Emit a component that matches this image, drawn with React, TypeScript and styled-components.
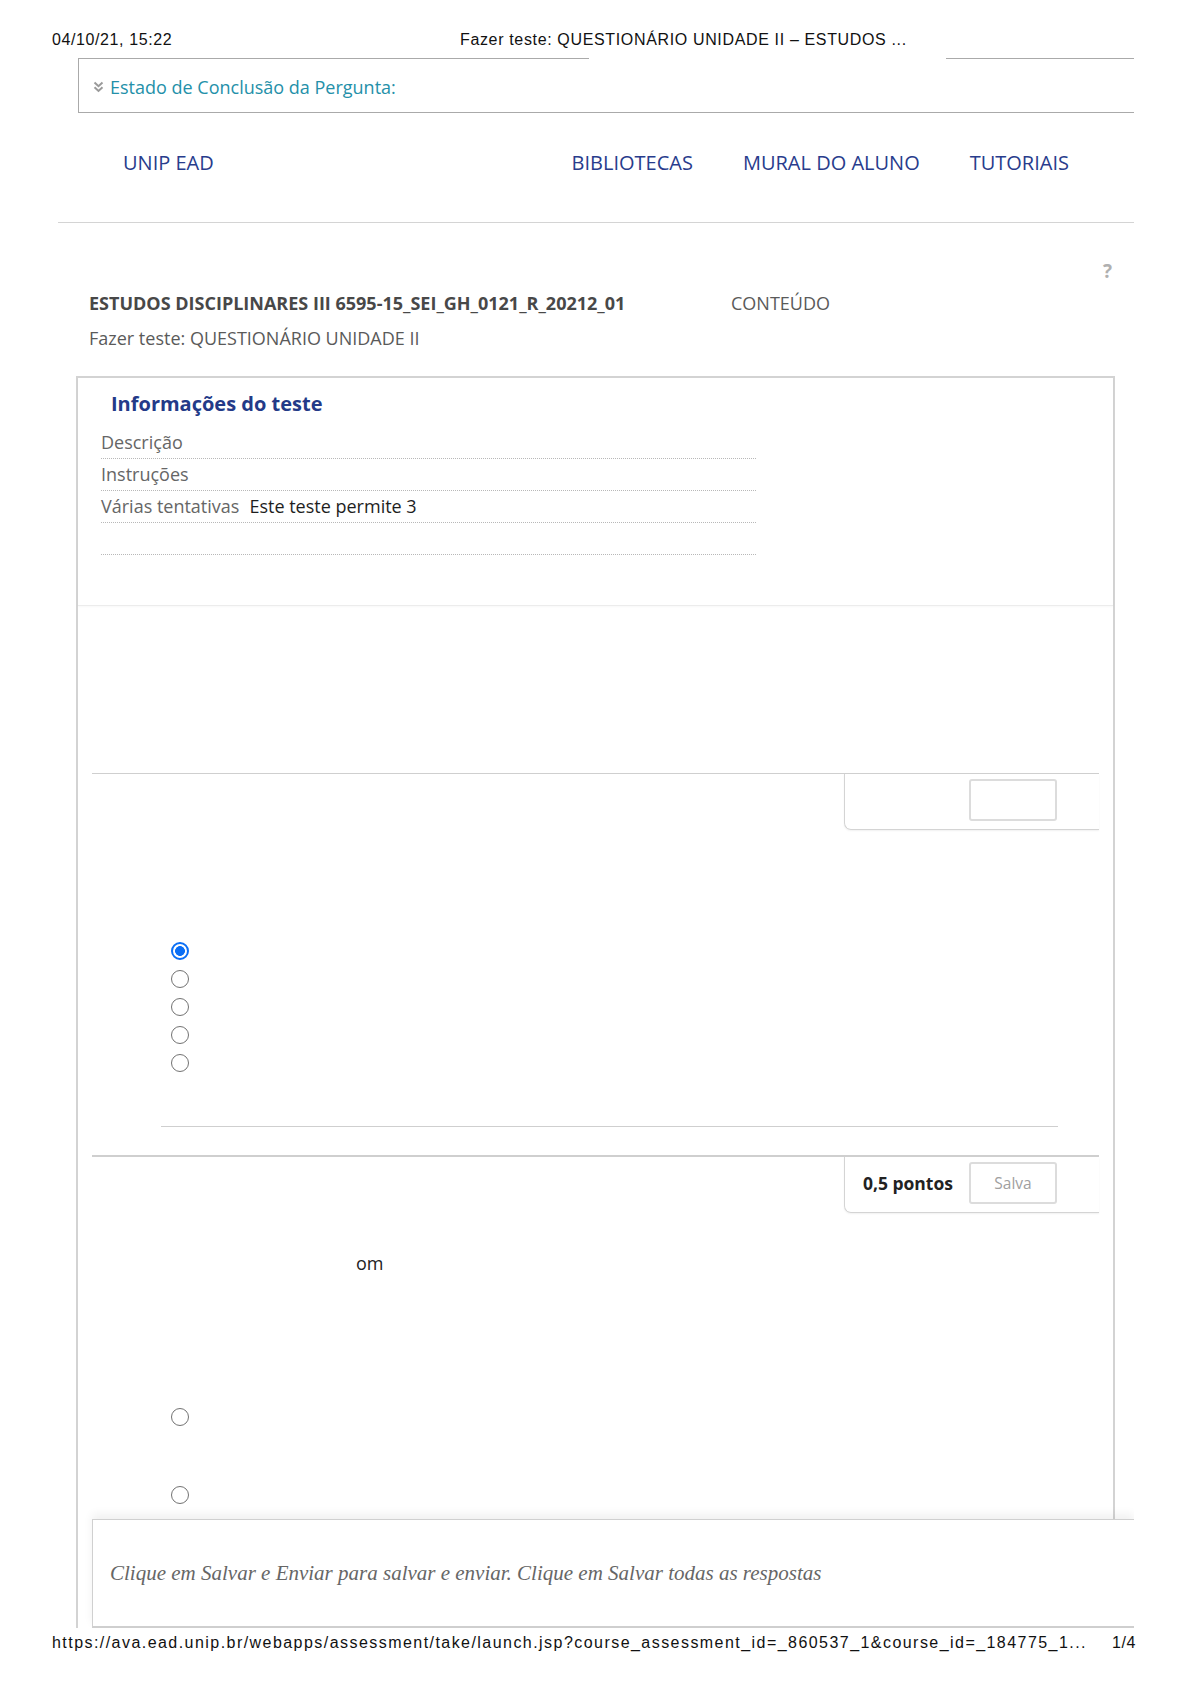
import React from "react"
import styled, { createGlobalStyle } from "styled-components"

const GlobalStyle = createGlobalStyle`
  html, body {
    margin: 0;
    padding: 0;
    background: #fff;
  }
  body {
    font-family: "Open Sans", "Liberation Sans", sans-serif;
    color: #333;
  }
`

const Sheet = styled.div`
  width: 1190px;
  height: 1684px;
  overflow: hidden;
  background: #fff;
`
const PrintHeader = styled.div`
  display: grid;
  grid-template-columns: 408px auto;
  height: 58px;
  box-sizing: border-box;
  padding: 30px 0 0 52px;
  font-family: "Liberation Sans", Arial, sans-serif;
  font-size: 16px;
  line-height: 20px;
  color: #111;
`
const PrintText = styled.span<{ $spacing: number }>`
  letter-spacing: ${(p) => p.$spacing}px;
`
const PrintFooter = styled.div`
  display: flex;
  justify-content: space-between;
  margin-top: 5px;
  padding: 0 54px 0 52px;
  font-family: "Liberation Sans", Arial, sans-serif;
  font-size: 16px;
  line-height: 20px;
  color: #111;
`
const Clip = styled.div`
  height: 1570px;
  overflow: hidden;
  margin-left: 58px;
  width: 1076px;
`
const StatusBox = styled.div`
  margin-left: 20px;
  height: 55px;
  box-sizing: border-box;
  padding: 3px 0 0 14px;
  display: flex;
  align-items: center;
  gap: 6px;
  border-left: 1px solid #aaa;
  border-bottom: 1px solid #aaa;
  background: linear-gradient(
      to right,
      #aaa 0,
      #aaa 510px,
      transparent 510px,
      transparent 867px,
      #aaa 867px
    )
    top left / 100% 1px no-repeat;
`
const StatusLink = styled.span`
  color: #2490a9;
  font-size: 18px;
`
const NavBar = styled.nav`
  height: 109px;
  box-sizing: border-box;
  padding: 0 65px 10px 65px;
  display: flex;
  align-items: center;
  justify-content: space-between;
`
const NavGroup = styled.div`
  display: flex;
  gap: 50px;
`
const NavLink = styled.a`
  color: #283c8c;
  font-size: 20px;
  text-decoration: none;
`
const Divider = styled.div`
  height: 1px;
  background: #d4d4d4;
`
const HelpRow = styled.div`
  margin-top: 37px;
  padding-right: 22px;
  text-align: right;
  font-size: 19px;
  font-weight: 700;
  line-height: 22px;
  color: #b0b0b0;
`
const CourseRow = styled.div`
  display: grid;
  grid-template-columns: 642px auto;
  margin-top: 9px;
  padding-left: 31px;
  line-height: 24px;
  font-size: 18px;
`
const CourseTitle = styled.span`
  font-weight: 700;
  color: #484848;
`
const CourseTab = styled.span`
  color: #5a5a5a;
`
const Breadcrumb = styled.div`
  margin-top: 11px;
  padding-left: 31px;
  line-height: 24px;
  font-size: 18px;
  color: #5a5a5a;
`
const OuterBox = styled.div`
  margin: 26px 0 0 18px;
  width: 1039px;
  box-sizing: border-box;
  border: 2px solid #d3d3d3;
  border-bottom: none;
  height: 1400px;
`
const InfoPanel = styled.section`
  padding: 12px 0 50px 0;
  border-bottom: 1px solid #ececec;
  box-shadow: 0 1px 2px rgba(0, 0, 0, 0.03);
`
const InfoTitle = styled.h3`
  margin: 0 0 9px 33px;
  font-size: 20px;
  line-height: 28px;
  font-weight: 700;
  color: #233a88;
`
const InfoList = styled.div`
  margin-left: 23px;
  width: 655px;
`
const InfoRow = styled.div`
  display: flex;
  gap: 10px;
  height: 32px;
  box-sizing: border-box;
  border-bottom: 1px dotted #b8b8b8;
  font-size: 18px;
  line-height: 31px;
`
const InfoLabel = styled.span`
  color: #666;
`
const InfoValue = styled.span`
  color: #1e1e1e;
`
const Question = styled.div<{ $first?: boolean; $gap: number }>`
  margin: ${(p) => p.$gap}px 14px 0 14px;
  border-top: ${(p) => (p.$first ? 1 : 2)}px solid #cfcfcf;
`
const QuestionHead = styled.div`
  display: flex;
  justify-content: flex-end;
`
const PointsBox = styled.div`
  width: 255px;
  height: 56px;
  box-sizing: border-box;
  padding: 5px 42px 0 0;
  display: flex;
  align-items: flex-start;
  justify-content: flex-end;
  gap: 16px;
  border-left: 1px solid #d4d4d4;
  border-bottom: 1px solid #d4d4d4;
  border-bottom-left-radius: 7px;
  box-shadow: 0 1px 2px rgba(0, 0, 0, 0.06);
`
const Points = styled.span`
  font-size: 17.5px;
  font-weight: 700;
  line-height: 42px;
  color: #222;
`
const SaveButton = styled.button`
  width: 88px;
  height: 42px;
  box-sizing: border-box;
  border: 2px solid #dcdcdc;
  border-radius: 3px;
  background: #fff;
  font-family: "Open Sans", sans-serif;
  font-size: 15.5px;
  color: #a0a0a0;
  padding: 0;
`
const Choices = styled.div<{ $top: number; $gap: number }>`
  margin-top: ${(p) => p.$top}px;
  padding-left: 79px;
  display: flex;
  flex-direction: column;
  gap: ${(p) => p.$gap}px;
`
const ChoiceRow = styled.div`
  height: 28px;
  display: flex;
  align-items: center;
`
const Radio = styled.span<{ $checked?: boolean }>`
  width: 18px;
  height: 18px;
  box-sizing: border-box;
  border-radius: 50%;
  border: ${(p) => (p.$checked ? "2px solid #0b6ff5" : "1.5px solid #727272")};
  background: ${(p) =>
    p.$checked ? "radial-gradient(circle, #0b6ff5 0 4.6px, #fff 5.2px)" : "#fff"};
`
const QuestionRule = styled.div`
  margin: 49px 41px 0 69px;
  height: 1px;
  background: #cfcfcf;
`
const QuestionText = styled.div`
  margin-top: 38px;
  padding-left: 264px;
  font-size: 18px;
  line-height: 24px;
  color: #222;
`
const SubmitBar = styled.div`
  position: relative;
  z-index: 1;
  margin: 10px -21px 0 14px;
  height: 109px;
  box-sizing: border-box;
  display: flex;
  align-items: center;
  padding-left: 17px;
  background: #fff;
  border-top: 1px solid #d0d0d0;
  border-left: 1px solid #d0d0d0;
  border-bottom: 2px solid #cfcfcf;
  box-shadow: 0 -5px 9px rgba(0, 0, 0, 0.06);
`
const SubmitText = styled.p`
  margin: 0;
  font-family: "Liberation Serif", "Times New Roman", serif;
  font-style: italic;
  font-size: 21px;
  color: #666;
`

function Chevron() {
  return (
    <svg width="11" height="12" viewBox="0 0 11 12" fill="none">
      <polyline points="1.5,1.5 5.5,5.2 9.5,1.5" stroke="#9a9a9a" strokeWidth="2" />
      <polyline points="1.5,6.3 5.5,10 9.5,6.3" stroke="#9a9a9a" strokeWidth="2" />
    </svg>
  )
}

type Option = { checked?: boolean }

function Options({ items, top, gap }: { items: Option[]; top: number; gap: number }) {
  return (
    <Choices $top={top} $gap={gap}>
      {items.map((o, i) => (
        <ChoiceRow key={i}>
          <Radio $checked={o.checked} />
        </ChoiceRow>
      ))}
    </Choices>
  )
}

export default function App() {
  return (
    <Sheet>
      <GlobalStyle />
      <PrintHeader>
        <PrintText $spacing={0.6}>04/10/21, 15:22</PrintText>
        <PrintText $spacing={0.65}>Fazer teste: QUESTIONÁRIO UNIDADE II – ESTUDOS ...</PrintText>
      </PrintHeader>

      <Clip>
        <StatusBox>
          <Chevron />
          <StatusLink>Estado de Conclusão da Pergunta:</StatusLink>
        </StatusBox>

        <NavBar>
          <NavLink>UNIP EAD</NavLink>
          <NavGroup>
            <NavLink>BIBLIOTECAS</NavLink>
            <NavLink>MURAL DO ALUNO</NavLink>
            <NavLink>TUTORIAIS</NavLink>
          </NavGroup>
        </NavBar>
        <Divider />

        <HelpRow>?</HelpRow>
        <CourseRow>
          <CourseTitle>ESTUDOS DISCIPLINARES III 6595-15_SEI_GH_0121_R_20212_01</CourseTitle>
          <CourseTab>CONTEÚDO</CourseTab>
        </CourseRow>
        <Breadcrumb>Fazer teste: QUESTIONÁRIO UNIDADE II</Breadcrumb>

        <OuterBox>
          <InfoPanel>
            <InfoTitle>Informações do teste</InfoTitle>
            <InfoList>
              <InfoRow>
                <InfoLabel>Descrição</InfoLabel>
              </InfoRow>
              <InfoRow>
                <InfoLabel>Instruções</InfoLabel>
              </InfoRow>
              <InfoRow>
                <InfoLabel>Várias tentativas</InfoLabel>
                <InfoValue>Este teste permite 3</InfoValue>
              </InfoRow>
              <InfoRow />
            </InfoList>
          </InfoPanel>

          <Question $first $gap={167}>
            <QuestionHead>
              <PointsBox>
                <SaveButton />
              </PointsBox>
            </QuestionHead>
            <Options items={[{ checked: true }, {}, {}, {}, {}]} top={107} gap={0} />
            <QuestionRule />
          </Question>

          <Question $gap={28}>
            <QuestionHead>
              <PointsBox>
                <Points>0,5 pontos</Points>
                <SaveButton>Salva</SaveButton>
              </PointsBox>
            </QuestionHead>
            <QuestionText>om</QuestionText>
            <Options items={[{}, {}]} top={128} gap={50} />
          </Question>

          <SubmitBar>
            <SubmitText>
              Clique em Salvar e Enviar para salvar e enviar. Clique em Salvar todas as respostas
            </SubmitText>
          </SubmitBar>
        </OuterBox>
      </Clip>

      <PrintFooter>
        <PrintText $spacing={1.45}>
          https://ava.ead.unip.br/webapps/assessment/take/launch.jsp?course_assessment_id=_860537_1&course_id=_184775_1...
        </PrintText>
        <PrintText $spacing={0.6}>1/4</PrintText>
      </PrintFooter>
    </Sheet>
  )
}
